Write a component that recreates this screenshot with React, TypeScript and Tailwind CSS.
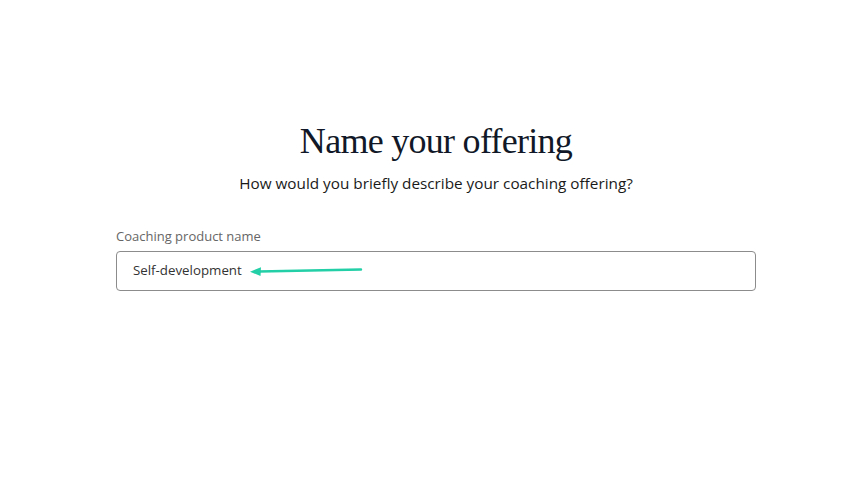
import React from 'react';

const Arrow = () => (
  <svg width="116" height="12" viewBox="0 0 116 12" className="block">
    <path d="M10 6.5 L112 4.5" stroke="#22cfa6" strokeWidth="2.4" strokeLinecap="round" fill="none" />
    <path d="M1 6.7 L12 2.2 L11.5 11 Z" fill="#22cfa6" />
  </svg>
);

export default function App() {
  return (
    <div className="min-h-[504px] w-full bg-white" style={{ fontFamily: '"Open Sans", "Noto Sans", sans-serif' }}>
      <div className="ml-[116px] w-[640px] pt-[119px]">
        <h1
          className="text-center text-[36px] leading-[44px] tracking-[-0.02em] text-[#111827]"
          style={{ fontFamily: '"Liberation Serif", "DejaVu Serif", serif' }}
        >
          Name your offering
        </h1>
        <p className="mt-[9px] text-center text-[15.3px] leading-[22px] text-[#1a1a1a]">
          How would you briefly describe your coaching offering?
        </p>
        <label className="mt-[33px] block text-[13px] leading-[18px] text-[#666666]">Coaching product name</label>
        <div className="mt-[6px] flex h-[40px] items-center rounded-[4px] border border-[#8c8c8c] pl-[16px]">
          <span className="text-[13.3px] text-[#333333]">Self-development</span>
          <span className="ml-[7px]">
            <Arrow />
          </span>
        </div>
      </div>
    </div>
  );
}
